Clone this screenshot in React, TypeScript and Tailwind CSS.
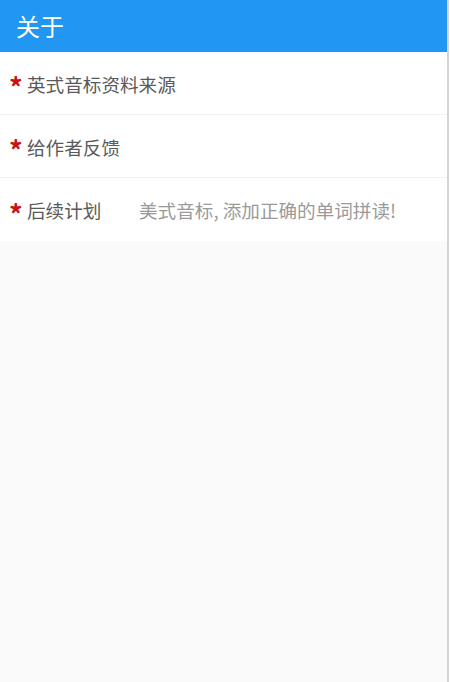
const rows = [
  { label: "英式音标资料来源" },
  { label: "给作者反馈" },
  { label: "后续计划", value: "美式音标, 添加正确的单词拼读!" },
];

export default function App() {
  return (
    <div
      className="flex h-[682px] w-[450px] bg-white"
      style={{ fontFamily: '"Noto Sans CJK SC", "Noto Sans", sans-serif' }}
    >
      <div className="flex w-[449px] flex-col border-r-2 border-[#d4d4d4] bg-[#fafafa]">
        <header className="flex h-[52px] items-center bg-[#2196f3] px-4">
          <h1 className="text-[24px] leading-none text-white">关于</h1>
        </header>
        <ul className="bg-white">
          {rows.map((row, i) => (
            <li
              key={row.label}
              className={`flex h-[63px] items-center whitespace-nowrap pl-[9px] pt-[1px] ${i < rows.length - 1 ? "border-b border-[#f2f2f2]" : ""}`}
            >
              <span className="mr-[4px] w-[14px] pt-[6px] text-[27px] font-bold leading-none text-[#cc1111]">*</span>
              <span className="min-w-[112px] text-[18.6px] text-[#5a5a5a]">{row.label}</span>
              {row.value && <span className="text-[18.6px] text-[#9a9a9a]">{row.value}</span>}
            </li>
          ))}
        </ul>
      </div>
    </div>
  );
}
